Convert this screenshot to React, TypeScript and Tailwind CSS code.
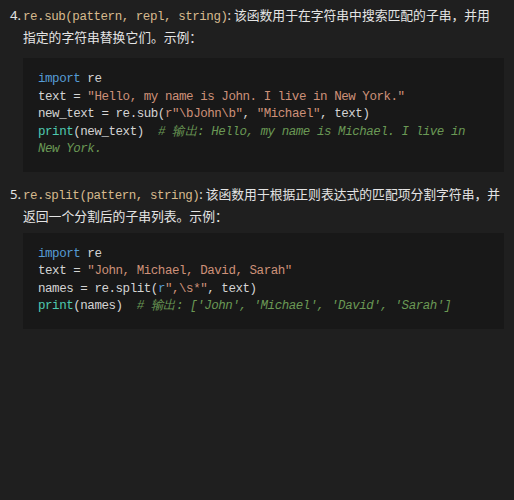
const mono = "font-['Liberation_Mono','DejaVu_Sans_Mono',monospace] text-[12.5px] tracking-[-0.45px]";

function Kw({ children }: { children: React.ReactNode }) {
  return <span className="text-[#569cd6]">{children}</span>;
}
function Str({ children }: { children: React.ReactNode }) {
  return <span className="text-[#ce9178]">{children}</span>;
}
function Fn({ children }: { children: React.ReactNode }) {
  return <span className="text-[#4ec9b0]">{children}</span>;
}
function Cm({ children }: { children: React.ReactNode }) {
  return <span className="text-[#6a9955] italic">{children}</span>;
}

function CodeBlock({ children }: { children: React.ReactNode }) {
  return (
    <pre
      className={`${mono} bg-[#181818] text-[#d4d4d4] leading-[17.5px] pl-[15px] pr-[24px] py-[13px] whitespace-pre-wrap`}
    >
      {children}
    </pre>
  );
}

function Item({
  n,
  code,
  desc,
  gap,
  children,
}: {
  n: string;
  code: string;
  desc: string;
  gap: string;
  children: React.ReactNode;
}) {
  return (
    <li className="flex">
      <span className="w-[13px] shrink-0 leading-[20px]">{n}</span>
      <div className="flex-1 min-w-0">
        <p className="leading-[20px] text-[12.8px] pr-[2px]">
          <code className={`${mono} text-[#d7ba8e]`}>{code}</code>:<span className="ml-[3px]">{desc}</span>
        </p>
        <div className={gap}>{children}</div>
      </div>
    </li>
  );
}

export default function App() {
  return (
    <div className="bg-[#1f1f1f] min-h-[500px] w-full text-[#e4e4e4] text-[13px] font-['Noto_Sans','Noto_Sans_CJK_SC',sans-serif] pt-[5px] pl-[10px] pr-[10px]">
      <ol className="flex flex-col gap-[12px]">
        <Item
          n="4."
          code="re.sub(pattern, repl, string)"
          desc="该函数用于在字符串中搜索匹配的子串，并用指定的字符串替换它们。示例："
          gap="mt-[11px]"
        >
          <CodeBlock>
            <Kw>import</Kw> re{"\n"}
            text = <Str>"Hello, my name is John. I live in New York."</Str>{"\n"}
            new_text = re.sub(<Str>r"\bJohn\b"</Str>, <Str>"Michael"</Str>, text){"\n"}
            <Fn>print</Fn>(new_text)  <Cm># 输出: Hello, my name is Michael. I live in New York.</Cm>
          </CodeBlock>
        </Item>
        <Item
          n="5."
          code="re.split(pattern, string)"
          desc="该函数用于根据正则表达式的匹配项分割字符串，并返回一个分割后的子串列表。示例："
          gap="mt-[7px]"
        >
          <CodeBlock>
            <Kw>import</Kw> re{"\n"}
            text = <Str>"John, Michael, David, Sarah"</Str>{"\n"}
            names = re.split(<Kw>r</Kw><Str>",\s*"</Str>, text){"\n"}
            <Fn>print</Fn>(names)  <Cm># 输出: ['John', 'Michael', 'David', 'Sarah']</Cm>
          </CodeBlock>
        </Item>
      </ol>
    </div>
  );
}
